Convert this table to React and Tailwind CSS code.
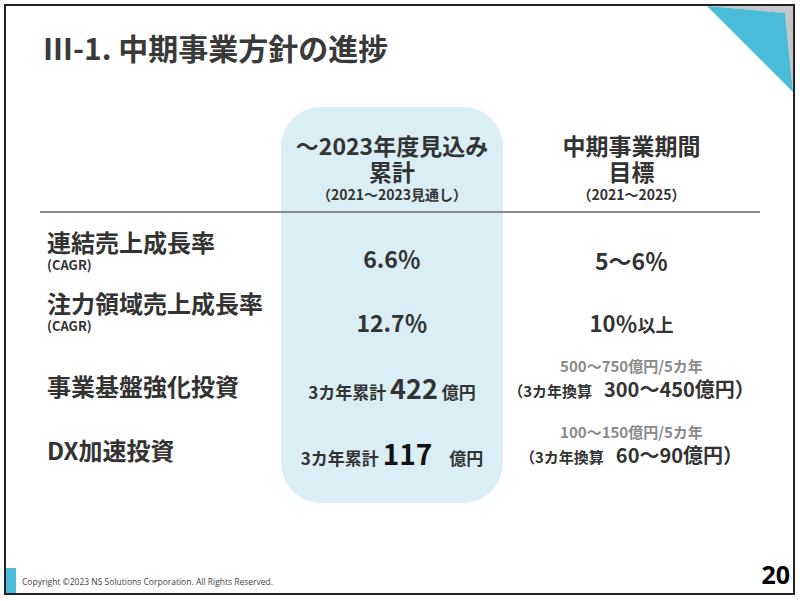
import React from "react";

const jp = { fontFamily: '"Noto Sans CJK JP", "Noto Sans", sans-serif' };

function Corner() {
  return (
    <svg className="absolute top-0 right-0" width="88" height="88" viewBox="0 0 88 88">
      <polygon points="2,0 88,0 88,86 80,7" fill="#c6c6c6" />
      <polygon points="2,0 80,7 88,86" fill="#4bbcd8" />
    </svg>
  );
}

function Conv({ value }) {
  return (
    <div className="leading-[26px] whitespace-nowrap">
      <span className="text-[15px]">（3カ年換算</span>
      <span className="ml-[12px] text-[20px]">{value}</span>
    </div>
  );
}

const rows = [
  {
    h: "h-[72px]",
    label: (
      <div className="pt-[16px]">
        <div className="text-[24px] leading-[26px]">連結売上成長率</div>
        <div className="text-[13px] leading-[20px]">(CAGR)</div>
      </div>
    ),
    mid: <div className="pt-[30px] text-[23px] leading-[30px]">6.6％</div>,
    right: <div className="pt-[32px] text-[23px] leading-[30px]">5〜6％</div>,
  },
  {
    h: "h-[65px]",
    label: (
      <div className="pt-[5px]">
        <div className="text-[24px] leading-[26px]">注力領域売上成長率</div>
        <div className="text-[13px] leading-[20px]">(CAGR)</div>
      </div>
    ),
    mid: <div className="pt-[22px] text-[23px] leading-[30px]">12.7％</div>,
    right: (
      <div className="pt-[22px] leading-[30px]">
        <span className="text-[22px]">10％</span>
        <span className="text-[18px]">以上</span>
      </div>
    ),
  },
  {
    h: "h-[70px]",
    label: <div className="pt-[21px] text-[24px] leading-[30px]">事業基盤強化投資</div>,
    mid: (
      <div className="pt-[23px] leading-[30px] whitespace-nowrap">
        <span className="text-[17px]">3カ年累計 </span>
        <span className="text-[27px]">422</span>
        <span className="text-[17px]"> 億円</span>
      </div>
    ),
    right: (
      <div className="pt-[6px]">
        <div className="text-[15px] leading-[20px] text-[#8a8a8a]">500〜750億円/5カ年</div>
        <Conv value="300〜450億円）" />
      </div>
    ),
  },
  {
    h: "h-[83px]",
    label: <div className="pt-[15px] text-[24px] leading-[30px]">DX加速投資</div>,
    mid: (
      <div className="pt-[18px] leading-[30px] whitespace-nowrap">
        <span className="text-[17px]">3カ年累計 </span>
        <span className="text-[28px] text-[#111]">117</span>
        <span className="text-[17px]">　億円</span>
      </div>
    ),
    right: (
      <div className="pt-[2px]">
        <div className="text-[15px] leading-[20px] text-[#8a8a8a]">100〜150億円/5カ年</div>
        <Conv value="60〜90億円）" />
      </div>
    ),
  },
];

export default function App() {
  return (
    <div className="w-[800px] h-[601px] bg-white p-[4px]" style={jp}>
      <div className="relative w-[791px] h-[591px] border-2 border-[#222] flex flex-col text-[#333] font-bold">
        <Corner />
        <h1 className="pt-[21px] pl-[37px] text-[30px] leading-[40px] text-[#3a3a3a]">
          Ⅲ-1. 中期事業方針の進捗
        </h1>

        <div className="mt-[40px] ml-[34px] grid grid-cols-[241px_222px_257px]">
          <div className="h-[106px] border-b-2 border-[#8a8a8a]" />
          <div className="h-[106px] border-b-2 border-[#8a8a8a] bg-[#d9eff5] rounded-t-[40px] text-center pt-[25px]">
            <div className="text-[23px] leading-[26px]">〜2023年度見込み</div>
            <div className="text-[23px] leading-[26px]">累計</div>
            <div className="text-[14px] leading-[20px]">（2021〜2023見通し）</div>
          </div>
          <div className="h-[106px] border-b-2 border-[#8a8a8a] text-center pt-[25px]">
            <div className="text-[23px] leading-[26px]">中期事業期間</div>
            <div className="text-[23px] leading-[26px]">目標</div>
            <div className="text-[14px] leading-[20px]">（2021〜2025）</div>
          </div>

          {rows.map((r, i) => (
            <React.Fragment key={i}>
              <div className={`${r.h} pl-[7px]`}>{r.label}</div>
              <div
                className={`${r.h} bg-[#d9eff5] text-center ${
                  i === rows.length - 1 ? "rounded-b-[40px]" : ""
                }`}
              >
                {r.mid}
              </div>
              <div className={`${r.h} text-center`}>{r.right}</div>
            </React.Fragment>
          ))}
        </div>

        <div className="mt-auto flex items-end">
          <div className="w-[10px] h-[25px] bg-[#4bbcd8]" />
          <div
            className="ml-[6px] mb-[6px] text-[8.5px] leading-[10px] font-normal text-[#444]"
            style={{ fontFamily: '"Open Sans", sans-serif' }}
          >
            Copyright ©2023 NS Solutions Corporation. All Rights Reserved.
          </div>
          <div
            className="ml-auto mr-[3px] mb-[5px] text-[25px] leading-[28px] text-black"
            style={{ fontFamily: '"Open Sans", sans-serif' }}
          >
            20
          </div>
        </div>
      </div>
    </div>
  );
}
